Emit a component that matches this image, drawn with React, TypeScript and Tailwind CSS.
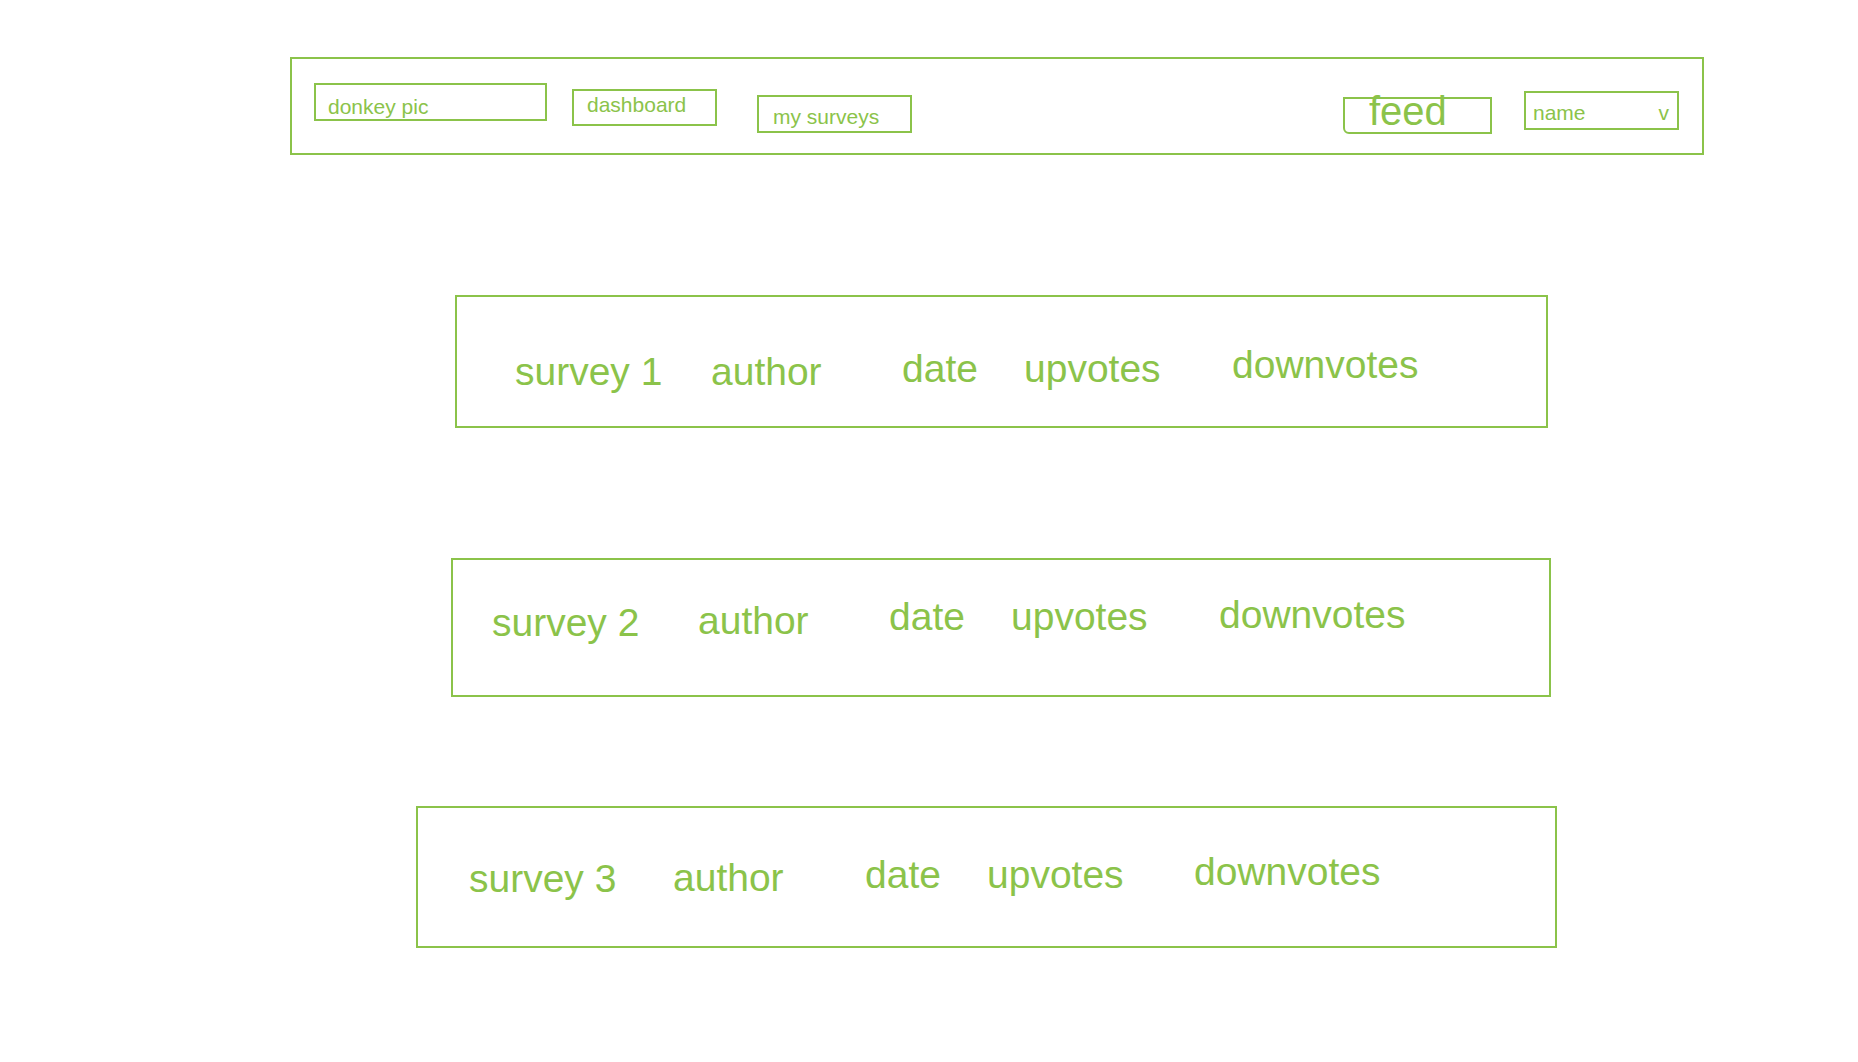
import React from 'react';

const ink = 'border-2 border-[#8bc34a]';

type Row = {
  label: string;
  top: string;
  cols: { text: string; w: string; mt: string }[];
};

const rows: Row[] = [
  {
    label: 'survey 1',
    top: 'mt-[140px] ml-[455px] w-[1093px] h-[133px] pt-[48px] pl-[58px]',
    cols: [
      { text: 'survey 1', w: 'w-[196px]', mt: 'mt-[7px]' },
      { text: 'author', w: 'w-[191px]', mt: 'mt-[7px]' },
      { text: 'date', w: 'w-[122px]', mt: 'mt-[4px]' },
      { text: 'upvotes', w: 'w-[208px]', mt: 'mt-[4px]' },
      { text: 'downvotes', w: 'w-[220px]', mt: 'mt-0' },
    ],
  },
  {
    label: 'survey 2',
    top: 'mt-[130px] ml-[451px] w-[1100px] h-[139px] pt-[35px] pl-[39px]',
    cols: [
      { text: 'survey 2', w: 'w-[206px]', mt: 'mt-[8px]' },
      { text: 'author', w: 'w-[191px]', mt: 'mt-[6px]' },
      { text: 'date', w: 'w-[122px]', mt: 'mt-[2px]' },
      { text: 'upvotes', w: 'w-[208px]', mt: 'mt-[2px]' },
      { text: 'downvotes', w: 'w-[220px]', mt: 'mt-0' },
    ],
  },
  {
    label: 'survey 3',
    top: 'mt-[109px] ml-[416px] w-[1141px] h-[142px] pt-[44px] pl-[51px]',
    cols: [
      { text: 'survey 3', w: 'w-[204px]', mt: 'mt-[7px]' },
      { text: 'author', w: 'w-[192px]', mt: 'mt-[6px]' },
      { text: 'date', w: 'w-[122px]', mt: 'mt-[3px]' },
      { text: 'upvotes', w: 'w-[207px]', mt: 'mt-[3px]' },
      { text: 'downvotes', w: 'w-[220px]', mt: 'mt-0' },
    ],
  },
];

function Header() {
  return (
    <div className={`${ink} ml-[290px] mt-[57px] w-[1414px] h-[98px] flex items-start pl-[22px] pr-[23px]`}>
      <div className={`${ink} mt-[24px] w-[233px] h-[38px] pl-[12px] pt-[11px] text-[21px] leading-none`}>
        donkey pic
      </div>
      <div className={`${ink} ml-[25px] mt-[30px] w-[145px] h-[37px] pl-[13px] pt-[3px] text-[21px] leading-none`}>
        dashboard
      </div>
      <div className={`${ink} ml-[40px] mt-[36px] w-[155px] h-[38px] pl-[14px] pt-[9px] text-[21px] leading-none`}>
        my surveys
      </div>

      <div className={`${ink} ml-auto mt-[38px] w-[149px] h-[37px] pl-[24px] flex items-start rounded-bl-[6px]`}>
        <span className="-mt-[8px] text-[40px] leading-none">feed</span>
      </div>
      <div className={`${ink} ml-[32px] mt-[32px] w-[155px] h-[39px] pl-[7px] pr-[8px] pt-[9px] flex justify-between text-[21px] leading-none`}>
        <span>name</span>
        <span>v</span>
      </div>
    </div>
  );
}

export default function App() {
  return (
    <div className="min-h-screen bg-white text-[#8bc34a] font-['Liberation_Sans',Arial,sans-serif] flex flex-col items-start pb-[80px]">
      <Header />

      {rows.map((row) => (
        <div key={row.label} className={`${ink} ${row.top} flex items-start`}>
          {row.cols.map((c) => (
            <span key={c.text} className={`${c.w} ${c.mt} shrink-0 text-[39px] leading-none whitespace-nowrap`}>
              {c.text}
            </span>
          ))}
        </div>
      ))}
    </div>
  );
}
